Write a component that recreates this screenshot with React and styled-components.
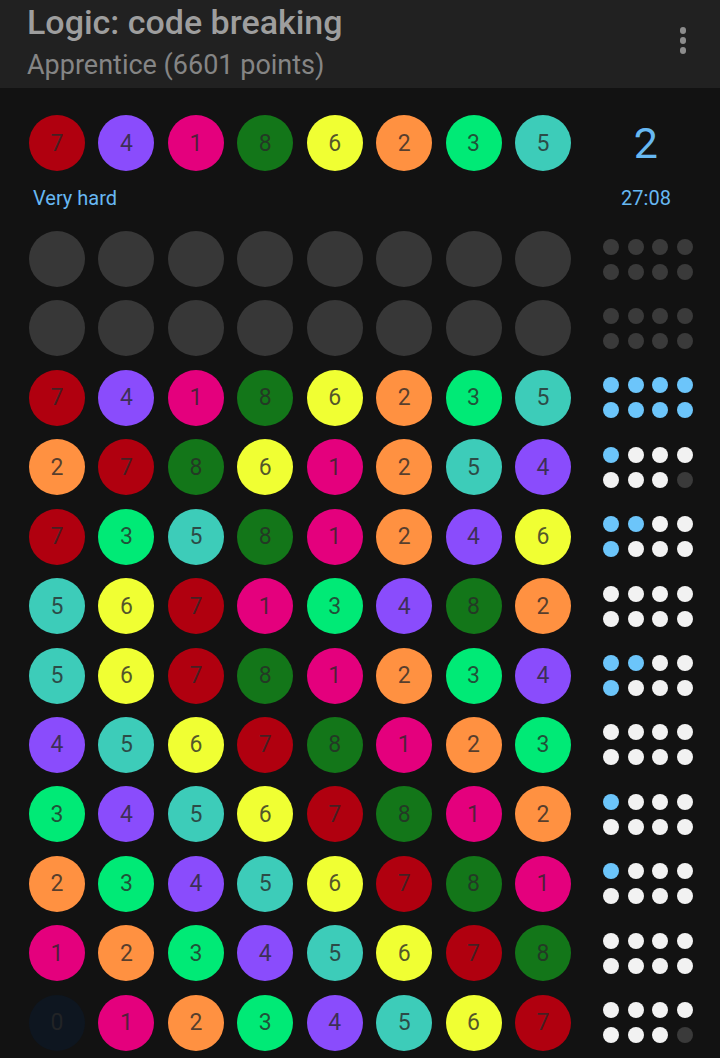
import React from 'react'
import styled, { createGlobalStyle } from 'styled-components'

const GlobalStyle = createGlobalStyle`
body {
  margin: 0;
  background: #121212;
  font-family: Roboto, "Noto Sans", sans-serif;
}
`

const COLORS = {
  0: '#0e1620',
  1: '#e4007d',
  2: '#ff9141',
  3: '#00ea76',
  4: '#8a4cfc',
  5: '#3dccb9',
  6: '#f0ff33',
  7: '#b0000f',
  8: '#137619',
}

const PEG = {
  b: '#6cc5fa',
  w: '#f2f2f2',
  e: '#3a3a3a',
}

const Page = styled.div`
width: 720px;
min-height: 1058px;
background: #121212;
`

const Header = styled.div`
height: 88px;
background: #212121;
display: flex;
justify-content: space-between;
padding: 3px 34px 0 27px;
box-sizing: border-box;
`

const Titles = styled.div`
display: flex;
flex-direction: column;
`

const Title = styled.div`
font-size: 34px;
font-weight: 500;
line-height: 38px;
color: #9e9e9e;
`

const Subtitle = styled.div`
font-size: 27px;
line-height: 32px;
margin-top: 8px;
color: #858585;
`

const Kebab = styled.div`
display: flex;
flex-direction: column;
gap: 3.5px;
margin-top: 24px;
`

const Dot = styled.div`
width: 6.5px;
height: 6.5px;
border-radius: 50%;
background: #8c8c8c;
`

const Body = styled.div`
padding: 27px 0 0 29px;
`

const Row = styled.div`
display: flex;
align-items: center;
margin-bottom: ${p => p.$last ? '0' : '13.43px'};
`

const Circles = styled.div`
display: flex;
gap: 13.43px;
`

const Circle = styled.div`
width: 56px;
height: 56px;
border-radius: 50%;
background: ${p => p.$color};
display: flex;
align-items: center;
justify-content: center;
font-size: 23px;
color: rgba(40, 40, 40, 0.78);
`

const Score = styled.div`
width: 90px;
margin-left: 30px;
text-align: center;
font-size: 43px;
color: #67b8f2;
line-height: 56px;
`

const InfoRow = styled.div`
display: flex;
justify-content: space-between;
align-items: center;
height: 22px;
margin: 16px 0 22px 4px;
font-size: 20px;
color: #67b8f2;
`

const Timer = styled.div`
width: 90px;
margin-right: 29px;
text-align: center;
font-size: 20px;
`

const Pegs = styled.div`
display: grid;
grid-template-columns: repeat(4, 16px);
column-gap: 8.67px;
row-gap: 9px;
margin-left: 32px;
`

const Peg = styled.div`
width: 16px;
height: 16px;
border-radius: 50%;
background: ${p => PEG[p.$kind]};
`

const secret = [7, 4, 1, 8, 6, 2, 3, 5]

const rows = [
  { guess: null, pegs: 'eeeeeeee' },
  { guess: null, pegs: 'eeeeeeee' },
  { guess: [7, 4, 1, 8, 6, 2, 3, 5], pegs: 'bbbbbbbb' },
  { guess: [2, 7, 8, 6, 1, 2, 5, 4], pegs: 'bwwwwwwe' },
  { guess: [7, 3, 5, 8, 1, 2, 4, 6], pegs: 'bbwwbwww' },
  { guess: [5, 6, 7, 1, 3, 4, 8, 2], pegs: 'wwwwwwww' },
  { guess: [5, 6, 7, 8, 1, 2, 3, 4], pegs: 'bbwwbwww' },
  { guess: [4, 5, 6, 7, 8, 1, 2, 3], pegs: 'wwwwwwww' },
  { guess: [3, 4, 5, 6, 7, 8, 1, 2], pegs: 'bwwwwwww' },
  { guess: [2, 3, 4, 5, 6, 7, 8, 1], pegs: 'bwwwwwww' },
  { guess: [1, 2, 3, 4, 5, 6, 7, 8], pegs: 'wwwwwwww' },
  { guess: [0, 1, 2, 3, 4, 5, 6, 7], pegs: 'wwwwwwwe' },
]

function CodeRow({ guess }) {
  return (
    <Circles>
      {guess
        ? guess.map((n, i) => <Circle key={i} $color={COLORS[n]}>{n}</Circle>)
        : Array.from({ length: 8 }).map((_, i) => <Circle key={i} $color="#373737" />)}
    </Circles>
  )
}

export default function App() {
  return (
    <Page>
      <GlobalStyle />
      <Header>
        <Titles>
          <Title>Logic: code breaking</Title>
          <Subtitle>Apprentice (6601 points)</Subtitle>
        </Titles>
        <Kebab>
          <Dot /><Dot /><Dot />
        </Kebab>
      </Header>
      <Body>
        <Row>
          <CodeRow guess={secret} />
          <Score>2</Score>
        </Row>
        <InfoRow>
          <span>Very hard</span>
          <Timer>27:08</Timer>
        </InfoRow>
        {rows.map((r, i) => (
          <Row key={i} $last={i === rows.length - 1}>
            <CodeRow guess={r.guess} />
            <Pegs>
              {r.pegs.split('').map((k, j) => <Peg key={j} $kind={k} />)}
            </Pegs>
          </Row>
        ))}
      </Body>
    </Page>
  )
}
